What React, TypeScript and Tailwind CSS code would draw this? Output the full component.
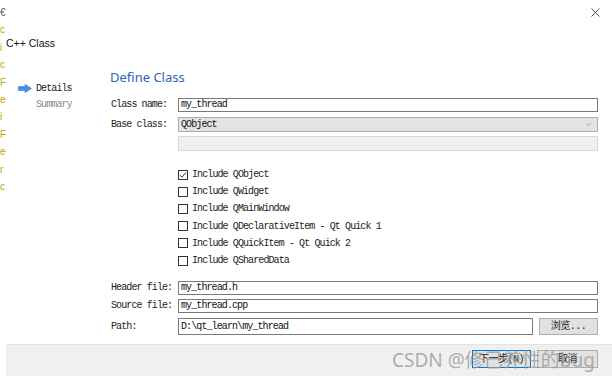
import { ChevronDown } from "lucide-react";

const mono = { fontFamily: '"Liberation Mono", "Noto Sans CJK SC", monospace' };

const stripe = ["€", "c", "i", "c", "F", "e", "i", "F", "e", "r", "c"];

const checks = [
    { label: "Include QObject", checked: true },
    { label: "Include QWidget", checked: false },
    { label: "Include QMainWindow", checked: false },
    { label: "Include QDeclarativeItem - Qt Quick 1", checked: false },
    { label: "Include QQuickItem - Qt Quick 2", checked: false },
    { label: "Include QSharedData", checked: false },
];

function Field({ label, value, h = "h-[14px]" }: { label: string; value: string; h?: string }) {
    return (
        <div className="flex items-center">
            <span className="w-[68px] pl-[1px] text-[10px] tracking-[-0.9px] text-[#222]">{label}</span>
            <div className={`flex-1 ${h} flex items-center border border-[#7a7a7a] bg-white px-[2px] text-[10px] tracking-[-0.9px] text-[#111]`}>
                {value}
            </div>
        </div>
    );
}

function CheckRow({ label, checked }: { label: string; checked: boolean }) {
    return (
        <div className="h-[17.2px] flex items-center gap-[4px]">
            <div className="w-[10px] h-[10px] border border-[#333] bg-white flex items-center justify-center">
                {checked && (
                    <svg width="8" height="8" viewBox="0 0 8 8">
                        <path d="M1 4.2 L3 6.2 L7 1.5" fill="none" stroke="#333" strokeWidth="1" />
                    </svg>
                )}
            </div>
            <span className="text-[10px] tracking-[-0.9px] text-[#222]">{label}</span>
        </div>
    );
}

export default function App() {
    return (
        <div className="w-[612px] h-[381px] bg-white flex overflow-hidden" style={mono}>
            <div
                className="w-[6px] shrink-0 overflow-hidden flex flex-col pt-[4px] text-[10px] leading-[17.4px] text-[#c2a400]"
                style={{ fontFamily: '"Liberation Sans", sans-serif' }}
            >
                {stripe.map((c, i) => (
                    <span key={i} className={i === 0 ? "text-[#555]" : ""}>{c}</span>
                ))}
            </div>

            <div className="flex-1 flex flex-col">
                <div className="h-[24px] flex items-center justify-end pr-[12px]">
                    <svg width="9" height="9" viewBox="0 0 9 9">
                        <path d="M0.5 0.5 L8.5 8.5 M8.5 0.5 L0.5 8.5" stroke="#555" strokeWidth="1" />
                    </svg>
                </div>
                <div
                    className="mt-[12px] h-[16px] flex items-center text-[10.5px] text-[#111]"
                    style={{ fontFamily: '"Liberation Sans", sans-serif' }}
                >
                    C++ Class
                </div>

                <div className="mt-[14px] flex">
                    <div className="w-[104px] shrink-0 pt-[14px] pl-[12px] text-[10px] tracking-[-0.9px]">
                        <div className="h-[16px] flex items-center gap-[4px] text-[#222]">
                            <svg width="14" height="9" viewBox="0 0 14 9">
                                <path d="M0.5 2.5 H7 V0.3 L13.5 4.5 L7 8.7 V6.5 H0.5 Z" fill="#4a90e2" stroke="#3b7fd0" strokeWidth="0.6" strokeLinejoin="round" />
                            </svg>
                            <span>Details</span>
                        </div>
                        <div className="h-[16px] flex items-center pl-[18px] text-[#8a8a8a]">Summary</div>
                    </div>

                    <div className="flex-1 pr-[14px] flex flex-col">
                        <div
                            className="h-[22px] flex items-center pt-[1px] text-[13px] text-[#2f5fb8]"
                            style={{ fontFamily: '"Noto Sans", sans-serif' }}
                        >
                            Define Class
                        </div>

                        <div className="mt-[9px] flex flex-col gap-[5px]">
                            <Field label="Class name:" value="my_thread" />
                            <div className="flex items-center">
                                <span className="w-[68px] pl-[1px] text-[10px] tracking-[-0.9px] text-[#222]">Base class:</span>
                                <div className="flex-1 h-[15px] flex items-center justify-between border border-[#acacac] bg-[#e3e3e3] pl-[2px] pr-[4px] text-[10px] tracking-[-0.9px] text-[#111]">
                                    <span>QObject</span>
                                    <ChevronDown size={9} color="#777" strokeWidth={1.5} />
                                </div>
                            </div>
                        </div>
                        <div className="mt-[4px] ml-[68px] h-[15px] border border-[#d9d9d9] bg-[#f0f0f0]" />

                        <div className="mt-[15px] ml-[68px] flex flex-col">
                            {checks.map((c) => (
                                <CheckRow key={c.label} label={c.label} checked={c.checked} />
                            ))}
                        </div>

                        <div className="mt-[11px] flex flex-col gap-[3px]">
                            <Field label="Header file:" value="my_thread.h" />
                            <Field label="Source file:" value="my_thread.cpp" />
                        </div>
                        <div className="mt-[5px] flex items-center">
                            <span className="w-[68px] pl-[1px] text-[10px] tracking-[-0.9px] text-[#222]">Path:</span>
                            <div className="flex-1 h-[17px] flex items-center border border-[#7a7a7a] bg-white px-[2px] text-[10px] tracking-[-0.9px] text-[#111]">
                                D:\qt_learn\my_thread
                            </div>
                            <button className="ml-[6px] w-[59px] h-[17px] border border-[#adadad] bg-[#e1e1e1] text-[10px] tracking-[-0.5px] text-[#222]">
                                浏览...
                            </button>
                        </div>
                    </div>
                </div>

                <div className="relative mt-[9px] h-[32px] bg-[#f0f0f0] border-t border-[#e3e3e3] flex items-start justify-end gap-[6px] pt-[5px] pr-[14px]">
                    <button className="w-[59px] h-[18px] border border-[#0078d7] bg-[#e1e1e1] text-[10px] tracking-[-0.5px] text-[#222]">
                        下一步(N)
                    </button>
                    <button className="w-[61px] h-[18px] border border-[#adadad] bg-[#e1e1e1] text-[10px] tracking-[-0.5px] text-[#222]">
                        取消
                    </button>
                    <span
                        className="absolute left-[386px] top-[2px] text-[19px] leading-[26px] text-[#9a9a9a]/80 whitespace-nowrap"
                        style={{ fontFamily: '"Noto Sans", "Noto Sans CJK SC", sans-serif' }}
                    >
                        CSDN @修己养性的bug
                    </span>
                </div>
            </div>
        </div>
    );
}
